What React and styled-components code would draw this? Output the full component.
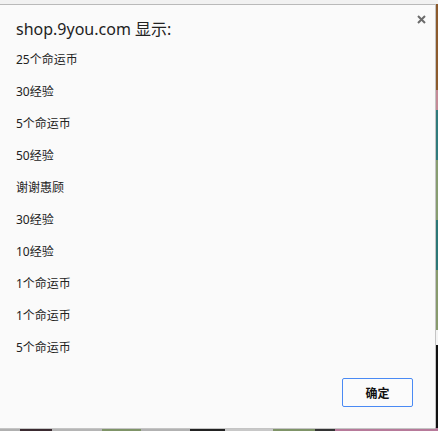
import React from 'react'
import styled, { createGlobalStyle } from 'styled-components'

const Global = createGlobalStyle`
  html, body { margin: 0; padding: 0; }
  body {
    width: 438px;
    height: 431px;
    overflow: hidden;
    font-family: "Noto Sans", "Noto Sans CJK SC", sans-serif;
  }
`

// backdrop: the page behind the alert, only its edges show
const Backdrop = styled.div`
  width: 438px;
  height: 431px;
  display: flex;
  flex-direction: column;
  background:
    linear-gradient(#f1f1f1, #f1f1f1) top / 100% 4px no-repeat,
    linear-gradient(to right,
      #b0b0b0 0 20px, #3a2a30 20px 52px, #b5b5b5 52px 102px,
      #7f9468 102px 141px, #b2b2b2 141px 190px, #222 190px 225px,
      #c8c8c8 225px 273px, #7f9468 273px 315px, #333 315px 335px,
      #b77a9a 335px 438px) bottom / 100% 3px no-repeat,
    linear-gradient(to bottom,
      #8c5a2c 0 90px, #c58a96 90px 110px, #2f7b7c 110px 160px,
      #879d70 160px 220px, #2b7776 220px 270px, #889a6c 270px 330px,
      #f4f4f4 330px 345px, #111 345px 431px) top right / 3px 431px no-repeat,
    #f1f1f1;
`

const Dialog = styled.div`
  position: relative;
  margin-top: 4px;
  width: 419px;
  height: 423px;
  padding-left: 16px;
  background: #fafafa;
  border-top: 1px solid #b9b9b9;
  border-right: 1px solid #c4c4c4;
  border-bottom: 1px solid #c4c4c4;
  border-bottom-right-radius: 2px;
  display: flex;
  flex-direction: column;
`

const Close = styled.button`
  position: absolute;
  top: 4px;
  right: 4px;
  width: 20px;
  height: 20px;
  border: 0;
  padding: 0;
  background: transparent;
  display: flex;
  align-items: center;
  justify-content: center;
`

const Title = styled.div`
  margin-top: 14px;
  font-size: 16px;
  line-height: 20px;
  color: #222;
`

const List = styled.div`
  margin-top: 5px;
  display: flex;
  flex-direction: column;
`

const Item = styled.div`
  font-size: 12px;
  line-height: 32px;
  height: 32px;
  color: #222;
`

const Footer = styled.div`
  margin-top: 14px;
  display: flex;
  justify-content: flex-end;
  padding-right: 22px;
`

const OkButton = styled.button`
  width: 71px;
  height: 29px;
  border: 1px solid #4a8af4;
  border-radius: 2px;
  background: #fbfbfb;
  font-family: "Noto Sans CJK SC", sans-serif;
  font-size: 12px;
  font-weight: 700;
  color: #111;
  padding: 0;
`

const items = [
  '25个命运币', '30经验', '5个命运币', '50经验', '谢谢惠顾',
  '30经验', '10经验', '1个命运币', '1个命运币', '5个命运币',
]

const App = () => {
  return (
    <>
      <Global />
      <Backdrop>
        <Dialog>
          <Close aria-label="close">
            <svg width="9" height="9" viewBox="0 0 9 9">
              <path d="M1 1L8 8M8 1L1 8" stroke="#6b6b6b" strokeWidth="2" />
            </svg>
          </Close>
          <Title>shop.9you.com 显示:</Title>
          <List>
            {items.map((t, i) => <Item key={i}>{t}</Item>)}
          </List>
          <Footer>
            <OkButton>确定</OkButton>
          </Footer>
        </Dialog>
      </Backdrop>
    </>
  )
}

export default App
